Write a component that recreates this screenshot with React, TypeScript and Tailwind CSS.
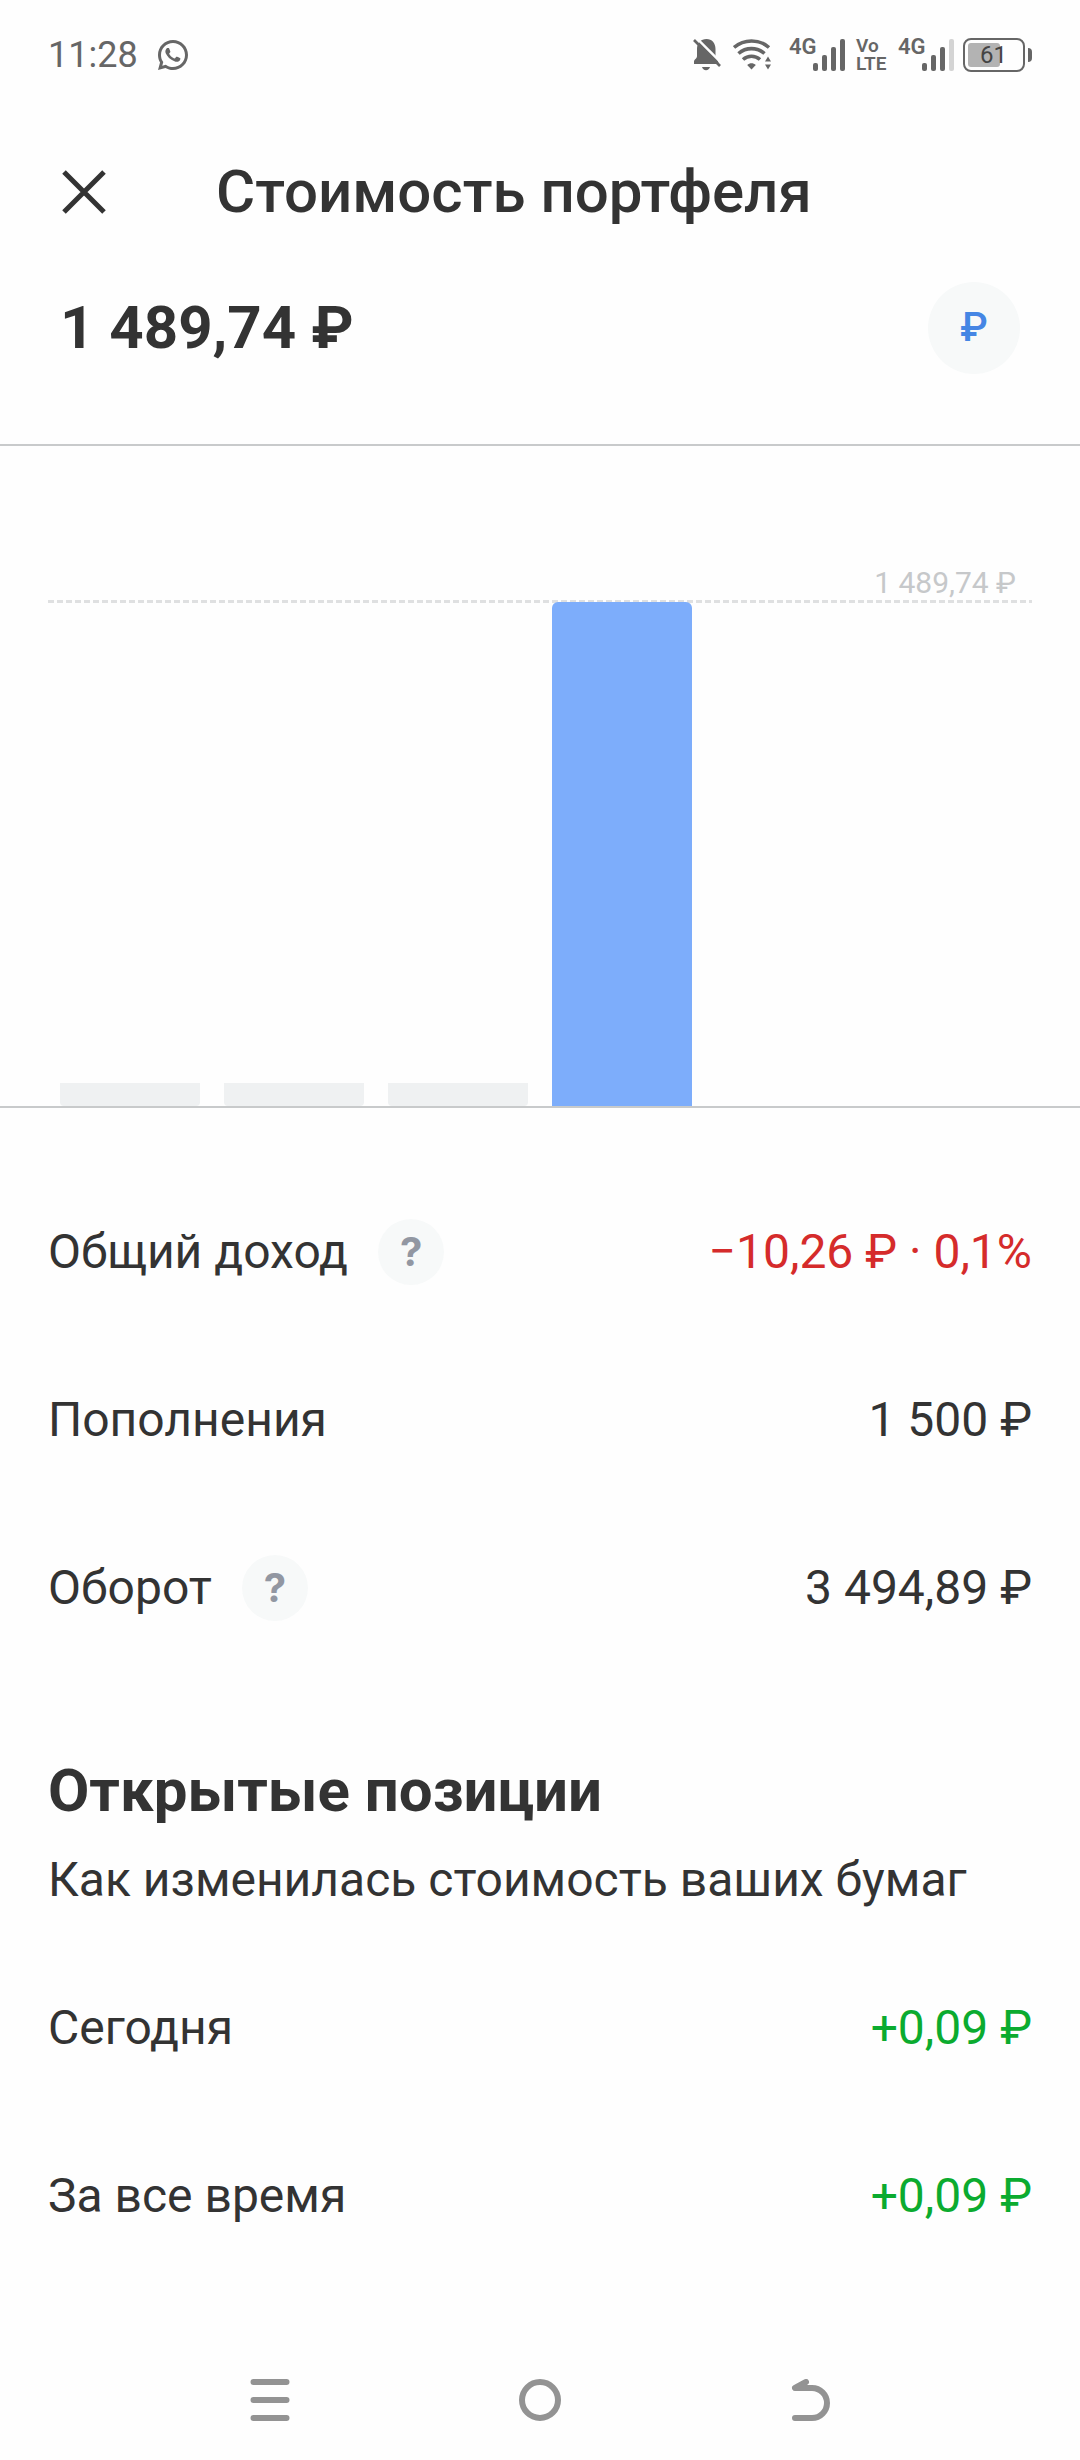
import React from 'react';
import { RiWhatsappLine } from 'react-icons/ri';

interface StatRow {
  label: string;
  value: string;
  tone?: 'negative' | 'positive';
  hint?: boolean;
}

const summary: StatRow[] = [
  { label: 'Общий доход', value: '−10,26 ₽ · 0,1%', tone: 'negative', hint: true },
  { label: 'Пополнения', value: '1 500 ₽' },
  { label: 'Оборот', value: '3 494,89 ₽', hint: true },
];

const positions: StatRow[] = [
  { label: 'Сегодня', value: '+0,09 ₽', tone: 'positive' },
  { label: 'За все время', value: '+0,09 ₽', tone: 'positive' },
];

// null = no column is drawn, 0 = grey stub
const bars: (number | null)[] = [0, 0, 0, 1489.74, null, null];
const maxValue = 1489.74;

const BellOffIcon = () => (
  <svg width="28" height="32" viewBox="0 0 28 32" fill="#666666">
    <path d="M13.500 0C19 0 22.500 4 22.500 10v6.500c0 3 3 4.500 3 7.500v1H1v-2.500c0-2 3-2.700 3-5.500v-7C4 4 8 0 13.500 0z" />
    <path d="M9 28h8c-.5 2-2 3.200-4 3.200S9.500 30 9 28z" />
    <path d="M3-1.500l27 27" stroke="#fefefe" strokeWidth="2.400" />
    <path d="M1 1l26 26" stroke="#666666" strokeWidth="2.600" />
  </svg>
);

const WifiIcon = () => (
  <svg width="38" height="32" viewBox="0 0 38 32" fill="none" stroke="#666666" strokeWidth="3.600">
    <path d="M1 8.500C11 -.2 26 -.2 36 8.500" />
    <path d="M5.500 14.500C13 8 24 8 31.500 14.500" />
    <path d="M10 20.500C15 16.200 22 16.200 27 20.500" />
    <path d="M14.200 26c2.600-2.400 6-2.400 8.600 0l-4.300 4.500z" fill="#666666" stroke="none" />
    <path d="M35 17.500l3 5h-6zM35 30.500l3-5h-6z" fill="#666666" stroke="none" />
  </svg>
);

const SignalIcon = ({ weak = false }: { weak?: boolean }) => (
  <svg width="33" height="32" viewBox="0 0 33 32" fill="#666666">
    <rect x="0" y="24" width="5" height="8" rx="2" />
    <rect x="9" y="16" width="5" height="16" rx="2" />
    <rect x="18" y="8" width="5" height="24" rx="2" />
    <rect x="27" y="0" width="5" height="32" rx="2" fill={weak ? '#d4d4d4' : '#666666'} />
  </svg>
);

const StatusBar = () => (
  <div className="flex h-[110px] items-center justify-between px-12 text-[#666666]">
    <div className="flex items-center gap-[17px]">
      <span className="text-[36px] leading-[40px]">11:28</span>
      <RiWhatsappLine size={36} />
    </div>
    <div className="flex items-center">
      <BellOffIcon />
      <div className="ml-3">
        <WifiIcon />
      </div>
      <div className="ml-[18px] flex h-8 items-start">
        <span className="w-6 text-[22px] leading-4 font-semibold">4G</span>
        <SignalIcon />
      </div>
      <div className="ml-2.5 w-[30px] text-[19px] leading-[18px] font-semibold">
        Vo
        <br />
        LTE
      </div>
      <div className="ml-3 flex h-8 items-start">
        <span className="w-6 text-[22px] leading-4 font-semibold">4G</span>
        <SignalIcon weak />
      </div>
      <div className="ml-2 flex items-center gap-[3px]">
        <div className="flex h-[34px] w-[62px] rounded-[8px] border-2 border-[#666666] p-[3px]">
          <div className="flex w-8 items-center rounded-[3px] bg-[#b3b3b3] pl-3 text-[24px] leading-none text-[#444444]">61</div>
        </div>
        <div className="h-3.5 w-1 rounded-r-full bg-[#666666]" />
      </div>
    </div>
  </div>
);

const Row = ({ row }: { row: StatRow }) => {
  const tone =
    row.tone === 'negative' ? 'text-[#d52b2b]' : row.tone === 'positive' ? 'text-[#0bab2f]' : 'text-[#333333]';

  return (
    <div className="flex h-[168px] items-center justify-between">
      <dt className="flex items-center gap-[30px]">
        {row.label}
        {row.hint && (
          <button
            type="button"
            aria-label={`Подсказка: ${row.label}`}
            className="flex size-[66px] items-center justify-center rounded-full bg-[#f7f9f9] font-[Inter,sans-serif] text-[40px] leading-none font-bold text-[#9297a2]"
          >
            ?
          </button>
        )}
      </dt>
      <dd className={tone}>{row.value}</dd>
    </div>
  );
};

const Chart = () => (
  <div className="border-y-2 border-[#c8cacb] px-12 pt-[120px]">
    <div className="pr-4 text-right text-[30px] leading-[34px] text-[#c6c8ca]">1 489,74 ₽</div>
    <div className="h-[3px] bg-[repeating-linear-gradient(90deg,#dfe0e1_0_6px,transparent_6px_9px)]" />
    <div className="-mt-px grid h-[504px] grid-cols-6 items-end">
      {bars.map((value, i) => (
        <div key={i} className="flex h-full items-end px-3">
          {value === 0 && <div className="h-[23px] w-full rounded-b-[4px] bg-[#eff1f2]" />}
          {value ? (
            <div className="w-full rounded-t-[6px] bg-[#7dadfb]" style={{ height: `${(value / maxValue) * 100}%` }} />
          ) : null}
        </div>
      ))}
    </div>
  </div>
);

const App: React.FC = () => {
  return (
    <div className="flex min-h-screen flex-col bg-[#fefefe] font-[Roboto,sans-serif] text-[#333333]">
      <StatusBar />

      <header className="flex h-[164px] items-center pl-[62px]">
        <button type="button" aria-label="Закрыть">
          <svg width="44" height="44" viewBox="0 0 44 44" stroke="#333333" strokeWidth="5">
            <path d="M2 2l40 40M42 2L2 42" />
          </svg>
        </button>
        <h1 className="ml-[110px] text-[60px] leading-[70px] font-medium">Стоимость портфеля</h1>
      </header>

      <main>
        <div className="flex h-[170px] items-start justify-between px-[60px] pt-2">
          <div className="text-[60px] leading-[92px] font-bold">1 489,74 ₽</div>
          <button
            type="button"
            aria-label="Валюта: рубль"
            className="flex size-[92px] items-center justify-center rounded-full bg-[#f7f9f9] text-[40px] leading-none font-medium text-[#4586e4]"
          >
            ₽
          </button>
        </div>

        <Chart />

        <dl className="px-12 pt-[60px] text-[48px] leading-[64px]">
          {summary.map((row) => (
            <Row key={row.label} row={row} />
          ))}
        </dl>

        <section className="px-12 pt-[84px] text-[48px] leading-[64px]">
          <h2 className="text-[60px] leading-[70px] font-bold">Открытые позиции</h2>
          <p className="mt-[22px]">Как изменилась стоимость ваших бумаг</p>
          <dl className="pt-8">
            {positions.map((row) => (
              <Row key={row.label} row={row} />
            ))}
          </dl>
        </section>
      </main>

      <nav className="mt-auto grid h-[120px] grid-cols-3 place-items-center px-[12.5%] text-[#939393]">
        <button type="button" aria-label="Недавние приложения">
          <svg width="40" height="42" viewBox="0 0 40 42" stroke="currentColor" strokeWidth="6" strokeLinecap="round">
            <path d="M3.500 3h33M3.500 21h33M3.500 39h33" />
          </svg>
        </button>
        <button type="button" aria-label="Домой">
          <svg width="42" height="42" viewBox="0 0 42 42" fill="none" stroke="currentColor" strokeWidth="6">
            <circle cx="21" cy="21" r="18" />
          </svg>
        </button>
        <button type="button" aria-label="Назад">
          <svg width="40" height="42" viewBox="0 0 40 42" fill="none" stroke="currentColor" strokeWidth="6" strokeLinecap="round" strokeLinejoin="round">
            <path d="M16 3L5 9h17a15 15 0 0 1 0 30H5" />
          </svg>
        </button>
      </nav>
    </div>
  );
};

export default App;
